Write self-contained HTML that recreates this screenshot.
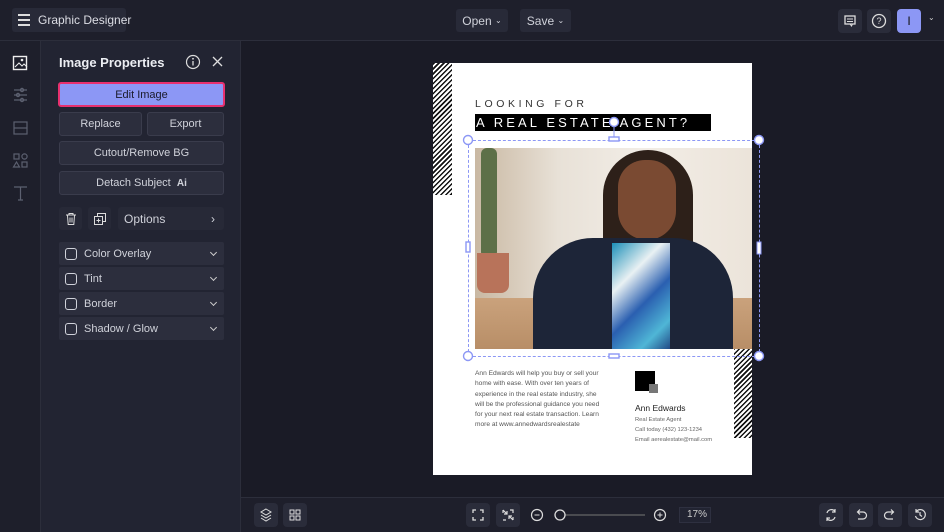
<!DOCTYPE html><html><head><style>
*{margin:0;padding:0;box-sizing:border-box}
body{width:944px;height:532px;background:#1a1b26;font-family:"Liberation Sans",sans-serif;color:#d8d9e0;position:relative;overflow:hidden;font-size:11px}
.a{position:absolute}
.btn{position:absolute;background:#2c2e3d;border:1px solid #3a3c4c;border-radius:3px;color:#d0d2da;font-size:11px;display:flex;align-items:center;justify-content:center}
.ib{position:absolute;background:#2a2c3a;border-radius:4px;width:24px;height:24px}
.hatch{background:repeating-linear-gradient(135deg,#111 0 1.5px,#fff 1.5px 3.5px)}
.row{position:absolute;left:59px;width:165px;height:23px;background:#2c2e3d;border-radius:2px;display:flex;align-items:center;font-size:11px;color:#d0d2da}
.cb{width:12px;height:12px;border:1.5px solid #d0d2da;border-radius:3px;margin:0 7px 0 6px}
.chev{position:absolute;right:8px;top:8px;width:5px;height:5px;border-right:1.3px solid #ccc;border-bottom:1.3px solid #ccc;transform:rotate(45deg)}
</style></head><body>
<div class="a" style="left:0;top:0;width:944px;height:41px;background:#1e1f2b;border-bottom:1px solid #2c2e3b"></div>
<div class="a" style="left:12px;top:8px;width:114px;height:24px;background:#282a38;border-radius:3px"></div>
<div class="a" style="left:18px;top:14px;width:12px;height:1.5px;background:#ddd;box-shadow:0 5px 0 #ddd,0 10px 0 #ddd"></div>
<div class="a" style="left:38px;top:13px;font-size:12px;color:#dcdde4">Graphic Designer</div>
<div class="btn" style="left:456px;top:9px;width:52px;height:23px;border:none;background:#282a38;font-size:12px">Open&nbsp;<span style="font-size:8px">⌄</span></div>
<div class="btn" style="left:520px;top:9px;width:51px;height:23px;border:none;background:#282a38;font-size:12px">Save&nbsp;<span style="font-size:8px">⌄</span></div>
<div class="ib" style="left:838px;top:9px"><svg width="24" height="24"><rect x="7" y="7" width="10" height="8" fill="none" stroke="#ddd" stroke-width="1.3"/><path d="M9 10h6M9 12.5h6M12 15l1.5 2 1-2" stroke="#ddd" fill="none"/></svg></div>
<div class="ib" style="left:867px;top:9px"><svg width="24" height="24"><circle cx="12" cy="12" r="6.5" fill="none" stroke="#ddd" stroke-width="1.3"/><text x="12" y="15" font-size="9" fill="#ddd" text-anchor="middle" font-family="Liberation Sans">?</text></svg></div>
<div class="a" style="left:897px;top:9px;width:24px;height:24px;background:#8c97f5;border-radius:4px;color:#111;font-size:12px;text-align:center;line-height:24px">I</div>
<div class="a" style="left:928px;top:13px;font-size:8px;color:#ccc">⌄</div>
<div class="a" style="left:0;top:41px;width:41px;height:491px;background:#1e1f2b;border-right:1px solid #2c2e3b"></div>
<svg class="a" style="left:12px;top:55px" width="18" height="150"><rect x="1.5" y="1.5" width="13" height="13" fill="none" stroke="#eee" stroke-width="1.4"/><path d="M3 12l4-4 3 3 2-2 3 3" stroke="#eee" fill="none"/><circle cx="10" cy="5" r="1.3" fill="#eee"/>
<g stroke="#5c6070" fill="none" stroke-width="1.2"><path d="M2 35h13M2 40h13M2 45h13"/><circle cx="10" cy="35" r="1.6"/><circle cx="6" cy="40" r="1.6"/><circle cx="10" cy="45" r="1.6"/>
<rect x="2" y="67" width="13" height="12"/><path d="M2 73h13"/>
<rect x="2" y="99" width="5" height="5"/><circle cx="12.5" cy="101.5" r="2.6"/><path d="M4.5 107l3 5h-6z"/><rect x="10" y="107" width="5" height="5"/>
<path d="M2 132h13M8.5 132v13M6 145h5"/></g></svg>
<div class="a" style="left:41px;top:41px;width:200px;height:491px;background:#222432;border-right:1px solid #2c2e3b"></div>
<div class="a" style="left:59px;top:55px;font-size:13px;font-weight:bold;color:#eceef3">Image Properties</div>
<svg class="a" style="left:185px;top:54px" width="40" height="16"><circle cx="8" cy="8" r="6.5" fill="none" stroke="#ddd" stroke-width="1.2"/><path d="M8 7v4.5" stroke="#ddd" stroke-width="1.3"/><circle cx="8" cy="4.8" r=".9" fill="#ddd"/><path d="M28 3l9 9M37 3l-9 9" stroke="#ddd" stroke-width="1.3"/></svg>
<div class="btn" style="left:58px;top:82px;width:167px;height:25px;background:#8c97f5;border:2px solid #e8306f;color:#1a1a2a">Edit Image</div>
<div class="btn" style="left:59px;top:112px;width:83px;height:24px">Replace</div>
<div class="btn" style="left:147px;top:112px;width:77px;height:24px">Export</div>
<div class="btn" style="left:59px;top:141px;width:165px;height:24px">Cutout/Remove BG</div>
<div class="btn" style="left:59px;top:171px;width:165px;height:24px">Detach Subject&nbsp;&nbsp;<b style="font-size:10px">Ai</b></div>
<div class="btn" style="left:59px;top:207px;width:23px;height:23px;background:#272937;border:none"><svg width="14" height="14"><path d="M2 3h10M5 3V1.5h4V3M3.5 3.5l.7 9h5.6l.7-9M6 5.5v5M8 5.5v5" stroke="#ddd" fill="none"/></svg></div>
<div class="btn" style="left:88px;top:207px;width:23px;height:23px;background:#272937;border:none"><svg width="14" height="14"><rect x="1.5" y="4.5" width="8" height="8" fill="none" stroke="#ddd"/><path d="M4.5 4.5V1.5h8v8h-3M5.5 6.5v4M3.5 8.5h4" stroke="#ddd" fill="none"/></svg></div>
<div class="btn" style="left:118px;top:207px;width:106px;height:23px;background:#272937;border:none;justify-content:flex-start;padding-left:6px;font-size:12px">Options<span style="position:absolute;right:9px">›</span></div>
<div class="row" style="top:242px"><div class="cb"></div>Color Overlay<div class="chev"></div></div>
<div class="row" style="top:267px"><div class="cb"></div>Tint<div class="chev"></div></div>
<div class="row" style="top:292px"><div class="cb"></div>Border<div class="chev"></div></div>
<div class="row" style="top:317px"><div class="cb"></div>Shadow / Glow<div class="chev"></div></div>
<div class="a" style="left:433px;top:63px;width:319px;height:412px;background:#fff"></div>
<div class="a hatch" style="left:433px;top:63px;width:19px;height:132px"></div>
<div class="a hatch" style="left:734px;top:279px;width:18px;height:159px"></div>
<div class="a" style="left:475px;top:98px;font-size:10.5px;letter-spacing:3.6px;color:#333;white-space:nowrap">LOOKING FOR</div>
<div class="a" style="left:475px;top:114px;width:236px;height:17px;background:#000;color:#fff;font-size:13px;letter-spacing:3.1px;line-height:17px;padding-left:1px;white-space:nowrap;overflow:hidden">A REAL ESTATE AGENT?</div>
<div class="a" style="left:475px;top:148px;width:277px;height:201px;overflow:hidden;background:linear-gradient(90deg,#c9b8a2,#e8e1d7 30%,#f2ede6 60%,#ece4da)">
 <div class="a" style="left:0;top:150px;width:277px;height:51px;background:linear-gradient(#caa27c,#b88e67)"></div>
 <div class="a" style="left:6px;top:0;width:16px;height:110px;background:#5d7048;border-radius:6px"></div>
 <div class="a" style="left:2px;top:105px;width:32px;height:40px;background:#b8735a;border-radius:0 0 8px 8px"></div>
 <div class="a" style="left:128px;top:2px;width:90px;height:112px;background:#2d2019;border-radius:45px 45px 20px 20px"></div>
 <div class="a" style="left:143px;top:12px;width:58px;height:80px;background:#7a4a32;border-radius:28px 28px 30px 30px"></div>
 <div class="a" style="left:58px;top:90px;width:200px;height:120px;background:#1d2538;border-radius:60px 60px 0 0"></div>
 <div class="a" style="left:137px;top:95px;width:58px;height:110px;background:linear-gradient(135deg,#1c8fb8,#e9f1f3 30%,#2a5fb0 55%,#4fb6d6 80%,#1b3a7a)"></div>
</div>
<div class="a" style="left:468px;top:140px;width:292px;height:217px;border:1.3px dashed #8c97f5"></div>
<svg class="a" style="left:460px;top:114px" width="306" height="250"><g fill="#fff" stroke="#8c97f5" stroke-width="1.4"><circle cx="8" cy="26" r="4.5"/><circle cx="299" cy="26" r="4.5"/><circle cx="8" cy="242" r="4.5"/><circle cx="299" cy="242" r="4.5"/><circle cx="154" cy="8" r="4.5"/><rect x="149" y="23" width="10" height="4"/><rect x="149" y="240" width="10" height="4"/><rect x="6" y="128" width="4" height="10"/></g><path d="M154 13v10" stroke="#8c97f5"/><rect x="297" y="128" width="4" height="12" fill="#fff" stroke="#8c97f5"/></svg>
<div class="a" style="left:475px;top:369px;width:132px;font-size:6.6px;line-height:10.3px;color:#555">Ann Edwards will help you buy or sell your home with ease. With over ten years of experience in the real estate industry, she will be the professional guidance you need for your next real estate transaction. Learn more at www.annedwardsrealestate</div>
<div class="a" style="left:635px;top:371px;width:20px;height:20px;background:#000"></div>
<div class="a" style="left:649px;top:384px;width:9px;height:9px;background:#777"></div>
<div class="a" style="left:635px;top:403px;font-size:8.5px;color:#222">Ann Edwards</div>
<div class="a" style="left:635px;top:415px;font-size:5.8px;line-height:10px;color:#666">Real Estate Agent<br>Call today (432) 123-1234<br>Email aerealestate@mail.com</div>
<div class="a" style="left:241px;top:497px;width:703px;height:35px;background:#1e1f2b;border-top:1px solid #2c2e3b"></div>
<div class="ib" style="left:254px;top:503px"><svg width="24" height="24"><path d="M12 6l5 3-5 3-5-3zM7 12l5 3 5-3M7 15l5 3 5-3" stroke="#ddd" fill="none"/></svg></div>
<div class="ib" style="left:283px;top:503px"><svg width="24" height="24"><g fill="none" stroke="#ddd"><rect x="7" y="7" width="4" height="4"/><rect x="13" y="7" width="4" height="4"/><rect x="7" y="13" width="4" height="4"/><rect x="13" y="13" width="4" height="4"/></g></svg></div>
<div class="ib" style="left:466px;top:503px"><svg width="24" height="24"><path d="M7 10V7h3M14 7h3v3M17 14v3h-3M10 17H7v-3" stroke="#ddd" fill="none" stroke-width="1.3"/></svg></div>
<div class="ib" style="left:496px;top:503px"><svg width="24" height="24"><path d="M7 10V7M14 7h3v3M17 14v3M10 17H7M7 7l4 4M11 8v3H8M17 17l-4-4M13 16v-3h3" stroke="#ddd" fill="none" stroke-width="1.2"/></svg></div>
<svg class="a" style="left:528px;top:506px" width="140" height="18"><circle cx="9" cy="9" r="5.5" fill="none" stroke="#ddd" stroke-width="1.2"/><path d="M6.5 9h5" stroke="#ddd"/><path d="M30 9h87" stroke="#666" stroke-width="1.2"/><circle cx="32" cy="9" r="5" fill="#1e1f2b" stroke="#ddd" stroke-width="1.3"/><circle cx="132" cy="9" r="5.5" fill="none" stroke="#ddd" stroke-width="1.2"/><path d="M129.5 9h5M132 6.5v5" stroke="#ddd"/></svg>
<div class="a" style="left:679px;top:507px;width:32px;height:16px;background:#222432;border:1px solid #2e3040;font-size:10px;color:#ccc;text-align:right;padding-right:3px;line-height:14px">17%</div>
<div class="ib" style="left:819px;top:503px"><svg width="24" height="24"><path d="M8 10a4.5 4.5 0 0 1 8-1.5M16 14a4.5 4.5 0 0 1-8 1.5M16 6v3h-3M8 18v-3h3" stroke="#ddd" fill="none" stroke-width="1.2"/></svg></div>
<div class="ib" style="left:849px;top:503px"><svg width="24" height="24"><path d="M9 9h5a3.5 3.5 0 0 1 0 7h-5M11 6.5L8.5 9l2.5 2.5" stroke="#ddd" fill="none" stroke-width="1.2"/></svg></div>
<div class="ib" style="left:878px;top:503px"><svg width="24" height="24"><path d="M15 9h-5a3.5 3.5 0 0 0 0 7h5M13 6.5L15.5 9 13 11.5" stroke="#ddd" fill="none" stroke-width="1.2"/></svg></div>
<div class="ib" style="left:908px;top:503px"><svg width="24" height="24"><path d="M8 9a5 5 0 1 1 -.5 4M8 6v3h3M12 9v3l2 1.5" stroke="#ddd" fill="none" stroke-width="1.2"/></svg></div>
</body></html>
